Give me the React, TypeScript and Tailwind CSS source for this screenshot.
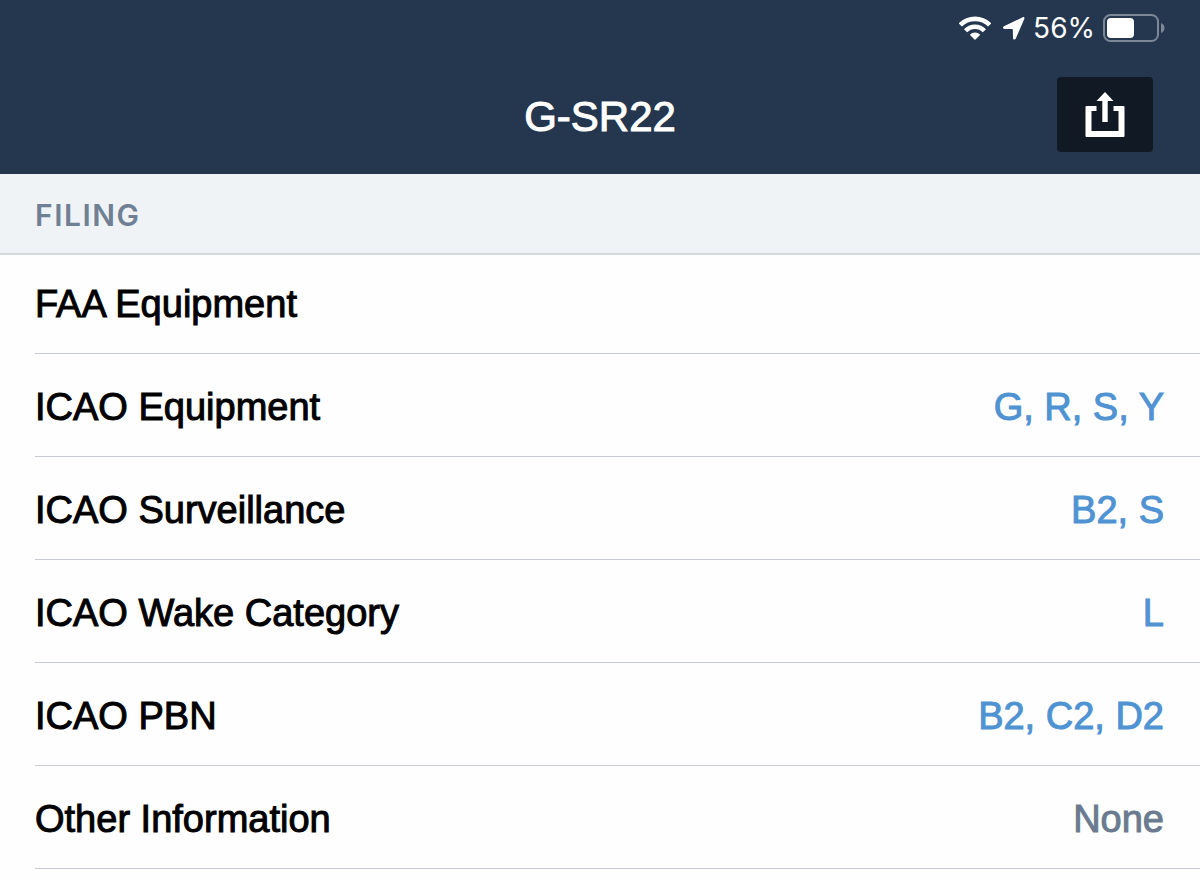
type FilingItem = {
  label: string;
  value: string;
  muted?: boolean;
};

const filingItems: FilingItem[] = [
  { label: "FAA Equipment", value: "" },
  { label: "ICAO Equipment", value: "G, R, S, Y" },
  { label: "ICAO Surveillance", value: "B2, S" },
  { label: "ICAO Wake Category", value: "L" },
  { label: "ICAO PBN", value: "B2, C2, D2" },
  { label: "Other Information", value: "None", muted: true },
];

function WifiIcon() {
  return (
    <svg width="32" height="24" viewBox="0 0 32 24" fill="none" aria-hidden="true">
      <path d="M1.3 9 A20.6 20.6 0 0 1 30.7 9" stroke="white" strokeWidth="4.6" />
      <path d="M6.6 14.8 A12.8 12.8 0 0 1 25.4 14.8" stroke="white" strokeWidth="4.4" />
      <path
        d="M10.8 18.8 A7.2 7.2 0 0 1 21.2 18.8 L16.8 23.3 Q16 24 15.2 23.3 Z"
        fill="white"
      />
    </svg>
  );
}

function LocationIcon() {
  return (
    <svg width="22" height="23" viewBox="0 0 22 23" fill="white" aria-hidden="true">
      <path d="M19.8 0.3 L0.9 9.3 C-0.5 10 -0.1 11.8 1.4 11.9 L9.4 12.1 Q9.8 12.1 9.8 12.5 L10 20.9 C10.1 22.7 12 23 12.8 21.5 L21.3 2 C21.8 0.7 21 -0.3 19.8 0.3 Z" />
    </svg>
  );
}

function BatteryIcon() {
  return (
    <svg width="62" height="28" viewBox="0 0 62 28" fill="none" aria-hidden="true">
      <rect x="1" y="1" width="54" height="26" rx="6.5" stroke="#7c8797" strokeWidth="2" />
      <rect x="4" y="4" width="27" height="20" rx="4" fill="white" />
      <path d="M58 9 Q61.5 10.5 61.5 14 Q61.5 17.5 58 19 Z" fill="#7c8797" />
    </svg>
  );
}

function ShareIcon() {
  return (
    <svg width="40" height="46" viewBox="0 0 40 46" fill="white" aria-hidden="true">
      <path d="M1.5 14 H11.5 V19 H6.5 V39 H33.5 V19 H28.5 V14 H38.5 Q39.5 14 39.5 15 V44 Q39.5 45 38.5 45 H1.5 Q0.5 45 0.5 44 V15 Q0.5 14 1.5 14 Z" />
      <path d="M20 0 L28.5 9 H22.7 V29.5 Q22.7 30 22.2 30 H17.8 Q17.3 30 17.3 29.5 V9 H11.5 Z" />
    </svg>
  );
}

export default function App() {
  return (
    <div className="min-h-screen bg-[#fefefe] font-['Liberation_Sans',Arial,sans-serif]">
      <header className="bg-[#25364f] text-white">
        {/* Status bar */}
        <div className="flex h-14 items-center justify-end gap-2 pr-[35px]">
          <WifiIcon />
          <div className="ml-1">
            <LocationIcon />
          </div>
          <span className="font-['Inter',sans-serif] text-[28px] leading-8">56%</span>
          <BatteryIcon />
        </div>

        {/* Title bar */}
        <div className="grid grid-cols-[1fr_auto_1fr] items-center px-[47px] pt-[21px] pb-[22px]">
          <h1 className="col-start-2 pt-1 text-[42px] leading-[50px] [-webkit-text-stroke:1px]">
            G-SR22
          </h1>
          <button
            type="button"
            aria-label="Share"
            className="flex h-[75px] w-24 items-center justify-center justify-self-end rounded bg-[#111924]"
          >
            <ShareIcon />
          </button>
        </div>
      </header>

      <main>
        <h2 className="border-b-2 border-[#d3d9df] bg-[#eff3f6] px-[35px] pt-[21px] pb-[18px] font-['Inter',sans-serif] text-[30px] leading-10 font-semibold tracking-wider text-[#708094]">
          FILING
        </h2>

        <dl className="ml-[35px] text-[38px] leading-[50px] [-webkit-text-stroke:1px]">
          {filingItems.map((item) => (
            <div
              key={item.label}
              className="flex justify-between border-b border-[#c5cad3] pt-7 pr-9 pb-6 first:pt-6"
            >
              <dt className="text-black">{item.label}</dt>
              <dd className={item.muted ? "text-[#6b7b8f]" : "text-[#4f93d2]"}>
                {item.value}
              </dd>
            </div>
          ))}
        </dl>
      </main>
    </div>
  );
}
